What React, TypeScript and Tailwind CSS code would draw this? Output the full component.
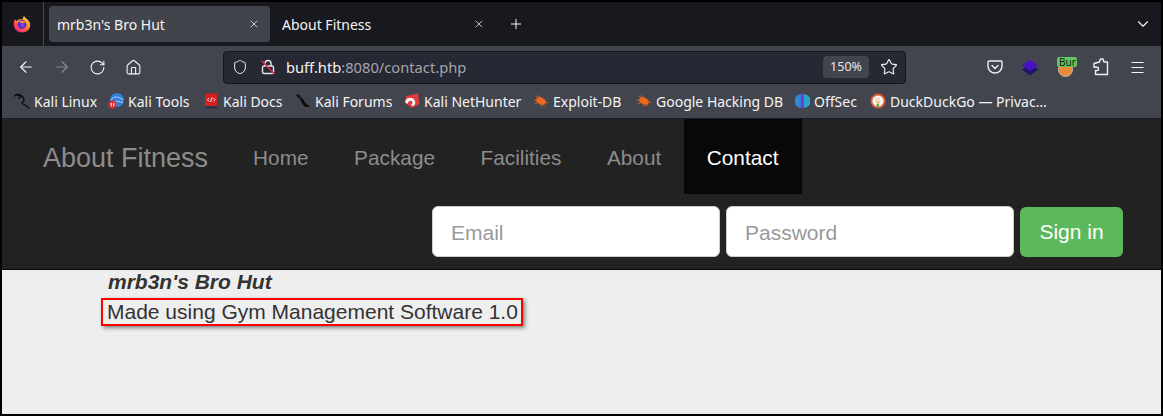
import { ArrowLeft, ArrowRight, ChevronDown, House, Menu, Plus, RotateCw, Shield, Star, X } from "lucide-react";

const bookmarks = [
  { label: "Kali Linux", icon: <KaliDragon />, width: "w-[94px]" },
  { label: "Kali Tools", icon: <KaliTools />, width: "w-[95px]" },
  { label: "Kali Docs", icon: <KaliDocs />, width: "w-[92px]" },
  { label: "Kali Forums", icon: <KaliForums />, width: "w-[109px]" },
  { label: "Kali NetHunter", icon: <NetHunter />, width: "w-[129px]" },
  { label: "Exploit-DB", icon: <Bug />, width: "w-[103px]" },
  { label: "Google Hacking DB", icon: <Bug />, width: "w-[158px]" },
  { label: "OffSec", icon: <OffSec />, width: "w-[76px]" },
  { label: "DuckDuckGo — Privac…", icon: <Duck />, width: "" },
];

function FirefoxLogo() {
  return (
    <svg width="18" height="18" viewBox="0 0 18 18">
      <defs>
        <linearGradient id="ff" x1="0.9" y1="0" x2="0.2" y2="1">
          <stop offset="0" stopColor="#ffe24a" />
          <stop offset="0.45" stopColor="#ff8a2b" />
          <stop offset="0.8" stopColor="#ff3d5c" />
          <stop offset="1" stopColor="#d91f8a" />
        </linearGradient>
      </defs>
      <path d="M1 6 L2.5 4.5 L3.5 6 C5 4.6 7.5 4 9.5 4.6 C10 3 10.5 1.5 11 0.5 C11.5 2.5 13 3 14.5 4.5 C16.5 6.5 17.2 8 17.2 10 C17.2 14.5 13.5 17.5 9 17.5 C4.5 17.5 0.8 14 0.8 9.5 C0.8 8.2 0.8 7 1 6Z" fill="url(#ff)" />
      <circle cx="9" cy="9.5" r="4.4" fill="#5a2cc4" />
      <path d="M6 6.8 C8 5.4 11.5 5.8 13 8 C11.5 7.6 10.5 8.2 9 8 C8 8 6.8 7.6 6 6.8Z" fill="#ff9a2e" />
      <circle cx="9.6" cy="10" r="2" fill="#7d47e0" />
    </svg>
  );
}

function BrokenLock() {
  return (
    <svg width="16" height="16" viewBox="0 0 16 16" fill="none" strokeWidth="1.4">
      <rect x="2.5" y="7" width="11" height="7.5" rx="1.5" stroke="#e6e6e6" />
      <path d="M5 7 V4.5 a3 3 0 0 1 6 0 V7" stroke="#e6e6e6" />
      <path d="M1.5 1.5 L14.5 15" stroke="#e22850" strokeWidth="1.5" />
    </svg>
  );
}

function Pocket() {
  return (
    <svg width="16" height="16" viewBox="0 0 16 16" fill="none" stroke="#f0f0f0" strokeWidth="1.4" strokeLinecap="round" strokeLinejoin="round">
      <path d="M2.2 2 H13.8 a1.2 1.2 0 0 1 1.2 1.2 V7 a7 7 0 0 1 -14 0 V3.2 A1.2 1.2 0 0 1 2.2 2Z" />
      <path d="M5 6.5 L8 9.5 L11 6.5" />
    </svg>
  );
}

function Puzzle() {
  return (
    <svg width="16" height="18" viewBox="0 0 16 18" fill="none" stroke="#f0f0f0" strokeWidth="1.4" strokeLinejoin="round">
      <path d="M6.5 4 L7.5 1 H10 L11 4 H14.5 V16.5 H2.5 V12.5 H4 a1.6 1.6 0 0 0 0 -3.2 H1 V5.5 L6.5 4Z" />
    </svg>
  );
}

function Stack() {
  return (
    <svg width="18" height="17" viewBox="0 0 18 17">
      <path d="M9 5 L17 10.5 L9 16.5 L1 10.5Z" fill="#1c1466" />
      <path d="M9 0.5 L17 6.5 L9 12 L1 6.5Z" fill="#4b12c4" />
    </svg>
  );
}

function Burp() {
  return (
    <div className="relative h-[20px] w-[20px]">
      <div className="absolute left-[1px] top-[5px] h-[15px] w-[15px] rounded-full border border-[#c9b8a4] bg-[#e98a3a]" />
      <div className="absolute left-0 top-0 h-[10px] w-[20px] rounded-[2px] bg-[#63c45f] pl-[2px] text-[10px] leading-[10px] text-[#10240f]">
        Bur
      </div>
    </div>
  );
}

function KaliDragon() {
  return (
    <svg width="16" height="16" viewBox="0 0 16 16" fill="none" stroke="#0c0c0c" strokeWidth="1.4" strokeLinecap="round">
      <path d="M0.5 3 C3 0.5 6 1.5 8 3.5 C6 3.5 5 4 5 5.5" />
      <path d="M3 2.5 C7 2 10 4 10 7 C10 9 8 8.5 8 10 C9 12 13 12 15 15.5" />
    </svg>
  );
}

function KaliTools() {
  return (
    <svg width="16" height="16" viewBox="0 0 16 16">
      <circle cx="9" cy="7" r="7" fill="#2f7fe0" />
      <path d="M3 7 C6 3 10 3 15 7 M5 11 C8 7 11 8 15 10" stroke="#bcd9f7" strokeWidth="1" fill="none" />
      <circle cx="4.5" cy="11.5" r="4" fill="#e1332f" />
      <path d="M3.3 10 V13 M5.7 10 V13" stroke="#fff" strokeWidth="1" />
    </svg>
  );
}

function KaliDocs() {
  return (
    <svg width="14" height="16" viewBox="0 0 14 16">
      <path d="M1 2 a1.5 1.5 0 0 1 1.5 -1.5 H13 V13 H2.5 A1.5 1.5 0 0 0 1 14.5Z" fill="#d3201f" />
      <path d="M1 14.5 A1.5 1.5 0 0 1 2.5 13 H13 V15.5 H2.5 A1.5 1.5 0 0 1 1 14.5Z" fill="#25324a" />
      <path d="M5 5 L3.5 6.7 L5 8.4 M9.5 5 L11 6.7 L9.5 8.4 M8 4.5 L6.5 9" stroke="#fff" strokeWidth="0.9" fill="none" />
    </svg>
  );
}

function KaliForums() {
  return (
    <svg width="17" height="16" viewBox="0 0 17 16">
      <path d="M0 0.5 L5 1.5 L6 4 L9 6.5 L10.5 9.5 L16.5 14.5 L10 14 L7 9.5 L5.5 6 L3 4Z" fill="#0c0c0c" />
    </svg>
  );
}

function NetHunter() {
  return (
    <svg width="16" height="16" viewBox="0 0 16 16">
      <path d="M2 3 L14 0.5 L15.5 11 L8 15 L1 10Z" fill="#e23b3b" />
      <path d="M1 9 C2 4 9 3 11 8 C12 11 10 13 8.5 13 L7 11.5 C8.5 11 9 9 7.5 8 C5.5 7 4 9 3.5 11Z" fill="#f3f3f3" />
    </svg>
  );
}

function Bug() {
  return (
    <svg width="16" height="14" viewBox="0 0 17 14" stroke="#e8641c" strokeWidth="0.9" fill="#ef6a1f">
      <ellipse cx="8.5" cy="7" rx="5" ry="3.2" transform="rotate(25 8.5 7)" />
      <path d="M1 6 H6 M3 2 L8 5 M5 1 L9 4 M2 10 L7 8 M11 11 L13 13 M8 11 L9 13 M13 8 L16 9" fill="none" />
    </svg>
  );
}

function OffSec() {
  return (
    <svg width="15" height="16" viewBox="0 0 15 16">
      <path d="M6.5 1 A7 7 0 0 0 6.5 15Z" fill="#2f86d6" />
      <path d="M8.5 1 A7 7 0 0 1 8.5 15Z" fill="#25a5c9" />
      <rect x="7" y="0.5" width="1" height="15" fill="#7b2fd0" />
    </svg>
  );
}

function Duck() {
  return (
    <svg width="16" height="16" viewBox="0 0 16 16">
      <circle cx="8" cy="8" r="7.5" fill="#de5833" />
      <circle cx="8" cy="8" r="5.6" fill="#f4f4f4" />
      <ellipse cx="7.5" cy="7" rx="2.6" ry="3" fill="#f7d9c8" />
      <path d="M6.5 9 H10 L9 10.5 H7Z" fill="#f2b01e" />
      <path d="M6.5 11 L9 11 L8.8 14 L6.8 14Z" fill="#5fa83a" />
    </svg>
  );
}

export default function App() {
  return (
    <div className="relative box-border flex h-[416px] w-[1163px] flex-col overflow-hidden border-2 border-black bg-[#eee]">
      {/* tab strip */}
      <div className="flex h-[44px] shrink-0 items-center bg-[#18191e] font-['Noto_Sans',sans-serif] text-[14px] text-[#f4f4f4]">
        <div className="flex h-full w-[42px] items-center justify-center border-r border-[#4a4b52] pr-[1px]">
          <FirefoxLogo />
        </div>
        <div className="ml-[5px] flex h-[36px] w-[221px] items-center justify-between rounded-[4px] bg-[#42444c] pl-[8px] pr-[10px]">
          <span className="pt-[1px]">mrb3n's Bro Hut</span>
          <X className="h-[12px] w-[12px]" strokeWidth={1.5} />
        </div>
        <div className="flex h-[36px] w-[221px] items-center justify-between pl-[12px] pr-[6px]">
          <span className="pt-[1px]">About Fitness</span>
          <X className="h-[12px] w-[12px]" strokeWidth={1.5} />
        </div>
        <Plus className="ml-[17px] h-[16px] w-[16px]" strokeWidth={1.5} />
        <ChevronDown className="ml-auto mr-[9px] h-[18px] w-[18px]" strokeWidth={1.5} />
      </div>

      {/* toolbar */}
      <div className="flex h-[38px] shrink-0 items-center bg-[#43454e] pt-[4px] font-['Noto_Sans',sans-serif] text-[#f4f4f4]">
        <ArrowLeft className="ml-[15px] h-[18px] w-[18px]" strokeWidth={1.5} />
        <ArrowRight className="ml-[18px] h-[18px] w-[18px] text-[#8a8b90]" strokeWidth={1.5} />
        <RotateCw className="ml-[18px] h-[17px] w-[17px]" strokeWidth={1.5} />
        <House className="ml-[19px] h-[17px] w-[17px]" strokeWidth={1.5} />
        <div className="ml-[81px] flex h-[33px] w-[683px] items-center rounded-[4px] border border-[#15151a] bg-[#262833] pl-[8px] pr-[6px]">
          <Shield className="h-[16px] w-[16px]" strokeWidth={1.5} />
          <span className="ml-[12px]">
            <BrokenLock />
          </span>
          <span className="ml-[10px] text-[14.7px]">
            buff.htb<span className="text-[#a4a5aa]">:8080/contact.php</span>
          </span>
          <span className="ml-auto flex h-[22px] w-[46px] items-center justify-center rounded-[4px] bg-[#43454e] text-[12.5px] text-[#e6e6e6]">
            150%
          </span>
          <Star className="ml-[11px] mr-[1px] h-[18px] w-[18px]" strokeWidth={1.5} />
        </div>
        <div className="ml-[81px]">
          <Pocket />
        </div>
        <div className="ml-[18px]">
          <Stack />
        </div>
        <div className="ml-[18px]">
          <Burp />
        </div>
        <div className="ml-[16px]">
          <Puzzle />
        </div>
        <Menu className="ml-[20px] h-[17px] w-[17px]" strokeWidth={1.5} />
      </div>

      {/* bookmarks */}
      <div className="flex h-[34px] shrink-0 items-center bg-[#43454e] pl-[12px] font-['Noto_Sans',sans-serif] text-[14px] text-[#f4f4f4]">
        {bookmarks.map((b) => (
          <div key={b.label} className={`flex items-center gap-[4px] whitespace-nowrap ${b.width}`}>
            <span className="flex w-[16px] justify-center">{b.icon}</span>
            <span>{b.label}</span>
          </div>
        ))}
      </div>

      <div className="h-[1px] shrink-0 bg-[#18191e]" />

      {/* site nav */}
      <div className="h-[151px] shrink-0 border-b border-[#080808] bg-[#222] font-['Liberation_Sans',sans-serif]">
        <div className="flex h-[75px] items-center text-[#8c8c8c]">
          <span className="ml-[41px] pt-[3px] text-[27px]">About Fitness</span>
          <a className="ml-[45px] pt-[2px] text-[20.8px]">Home</a>
          <a className="ml-[45.5px] pt-[2px] text-[20.8px]">Package</a>
          <a className="ml-[45.5px] pt-[2px] text-[20.8px]">Facilities</a>
          <a className="ml-[45.5px] pt-[2px] text-[20.8px]">About</a>
          <a className="ml-[22.5px] flex h-[75px] w-[118px] items-center bg-[#080808] pl-[23px] pt-[2px] text-[20.8px] text-white">Contact</a>
        </div>
        <div className="mr-[38px] mt-[12px] flex items-start justify-end gap-[6px]">
          <input
            placeholder="Email"
            className="h-[51px] w-[288px] rounded-[6px] border border-[#ccc] bg-white px-[18px] pt-[2px] text-[21px] outline-none placeholder:text-[#999]"
          />
          <input
            placeholder="Password"
            className="h-[51px] w-[288px] rounded-[6px] border border-[#ccc] bg-white px-[18px] pt-[2px] text-[21px] outline-none placeholder:text-[#999]"
          />
          <button className="mt-[1px] h-[50px] w-[103px] rounded-[6px] bg-[#5cb85c] text-[21px] text-white">Sign in</button>
        </div>
      </div>

      {/* page body */}
      <div className="flex flex-col items-start pl-[99px] font-['Liberation_Sans',sans-serif] text-[21px] text-[#333]">
        <div className="ml-[7px] mt-[-1px] font-bold italic leading-[26px]">mrb3n's Bro Hut</div>
        <div className="mt-[3px] border-2 border-[#f00] pl-[4px] pr-[3px] leading-[24px] shadow-[2px_2px_4px_rgba(0,0,0,0.45)]">
          Made using Gym Management Software 1.0
        </div>
      </div>
    </div>
  );
}
